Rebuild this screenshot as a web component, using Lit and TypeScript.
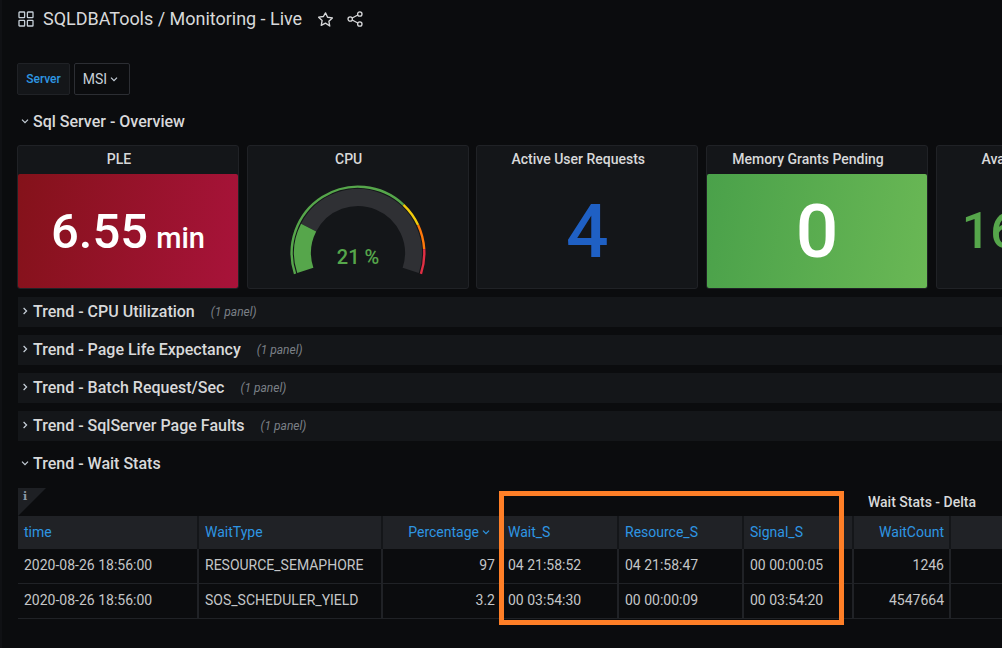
import { LitElement, html, css, svg } from "lit";
import { customElement } from "lit/decorators.js";

const CX = 358 - 248;
const CY = 254 - 175;
function pt(r: number, deg: number) {
  const a = (deg * Math.PI) / 180;
  return [CX - r * Math.cos(a), CY - r * Math.sin(a)];
}
// deg: 0 = left horizontal, growing clockwise over the top
function arc(r: number, from: number, to: number) {
  const [x1, y1] = pt(r, from);
  const [x2, y2] = pt(r, to);
  const large = to - from > 180 ? 1 : 0;
  return `M${x1.toFixed(2)} ${y1.toFixed(2)}A${r} ${r} 0 ${large} 1 ${x2.toFixed(2)} ${y2.toFixed(2)}`;
}
const START = -18.3;
const SWEEP = 216.6;
const at = (p: number) => START + (SWEEP * p) / 100;

const chevDown = html`<svg class="chev" viewBox="0 0 10 10"><path d="M2 3.6 5 6.6 8 3.6" fill="none" stroke="currentColor" stroke-width="1.2"/></svg>`;
const chevRight = html`<svg class="chev" viewBox="0 0 10 10"><path d="M3.6 2 6.6 5 3.6 8" fill="none" stroke="currentColor" stroke-width="1.2"/></svg>`;

@customElement("app-root")
export class AppRoot extends LitElement {
  static styles = css`
    :host {
      display: block;
      position: relative;
      width: 1002px;
      height: 648px;
      overflow: hidden;
      background: #0b0c0e;
      box-shadow: inset 2px 0 0 #101114;
      color: #d8d9da;
      font-family: Roboto, "Liberation Sans", sans-serif;
      font-size: 14px;
    }
    .page { padding-left: 18px; width: 1100px; box-sizing: border-box; }
    .header { height: 63px; display: flex; align-items: flex-start; color: #d8d9da; }
    .header-inner { height: 38px; display: flex; align-items: center; }
    .header .grid-ico { width: 16px; height: 16px; margin-right: 9px; color: #c7d0d9; }
    .title { font-size: 18px; letter-spacing: -0.02px; color: #d8d9da; white-space: nowrap; padding-bottom: 2px; }
    .star { width: 17px; height: 17px; margin-left: 15px; color: #d8d9da; }
    .share { width: 16px; height: 16px; margin-left: 13px; color: #d8d9da; }

    .vars { display: flex; height: 32px; margin-left: -1px; gap: 4px; }
    .var-label {
      width: 53px; box-sizing: border-box; display: flex; align-items: center; justify-content: center;
      background: #141619; border: 1px solid #202226; border-radius: 2px;
      color: #2e96e3; font-size: 12px; font-weight: 500;
    }
    .var-val {
      width: 56px; box-sizing: border-box; display: flex; align-items: center; justify-content: center;
      border: 1px solid #2c2e33; border-radius: 2px; color: #c7d0d9; font-size: 14px; padding-right: 2px;
    }
    .var-val .chev { width: 10px; height: 10px; margin-left: 2px; }

    .row-title {
      height: 30px; margin-top: 8px; display: flex; align-items: center;
      font-size: 16px; font-weight: 500; color: #d8d9da; white-space: nowrap;
      margin-left: 0; width: 984px; box-sizing: border-box;
    }
    .row-title.bg { background: #141619; }
    .rows .row-title { padding-bottom: 2px; }
    .row-title .chev { width: 10px; height: 10px; margin: 0 3px 0 2px; color: #c7d0d9; flex: none; }
    .row-title .count { font-size: 12px; font-weight: 400; font-style: italic; color: #7b8087; margin-left: 16px; margin-top: 2px; }
    .section { margin-top: 11px; }

    .panels { display: flex; gap: 7.67px; margin-top: 9px; margin-left: -1px; height: 144px; margin-bottom: 0; }
    .panel {
      width: 222px; height: 144px; box-sizing: border-box; flex: none;
      background: #141619; border: 1px solid #202226; border-radius: 3px;
      display: flex; flex-direction: column;
    }
    .ptitle { height: 28px; flex: none; display: flex; align-items: center; justify-content: center; font-size: 14px; font-weight: 500; color: #d8d9da; padding: 0 18px 2px 0; box-sizing: border-box; }
    .pbody { flex: 1; display: flex; align-items: center; justify-content: center; border-radius: 2px; }
    .red { background: linear-gradient(100deg, #84121a, #a8133a); }
    .green { background: linear-gradient(100deg, #4aa14a, #6ab855); }
    .big { font-weight: 500; color: #fff; line-height: 1; white-space: nowrap; }
    .ple { font-size: 49px; }
    .ple small { font-size: 29px; margin-left: 8px; }
    .four { font-size: 75px; color: #1f60c4; }
    .zero { font-size: 75px; }
    .avail { font-size: 50px; color: #56a64b; }
    .avail small { font-size: 26px; margin-left: 8px; }
    .gauge { width: 220px; height: 114px; display: block; }
    .gauge text { font-family: Roboto, sans-serif; font-size: 20px; font-weight: 500; fill: #56a64b; }

    .rows { margin-top: 8px; }
    .rows .row-title:first-child { margin-top: 0; }

    .tablewrap { position: relative; margin-top: 9px; width: 984px; }
    .corner {
      position: absolute; left: 0; top: 0; width: 0; height: 0;
      border-top: 28px solid #1e2024; border-right: 28px solid transparent;
    }
    .info { position: absolute; left: 5px; top: 3px; font-family: "DejaVu Serif", serif; font-size: 11px; font-weight: 700; color: #8e99a8; line-height: 1; }
    .ttitle { height: 28px; display: flex; align-items: center; justify-content: flex-end; padding-right: 26px; font-size: 14px; font-weight: 500; color: #d8d9da; }
    .tbl { display: grid; grid-template-columns: 181px 184px 119px 117px 125px 110px 97px 1fr; }
    .th, .td { box-sizing: border-box; display: flex; align-items: center; padding: 0 6px 2px 6px; white-space: nowrap; border-right: 2px solid #202226; }
    .th { height: 33px; background: #202226; color: #2e96e3; font-size: 14px; border-right-color: #141619; }
    .td { height: 35px; color: #c4c6c8; font-size: 14px; border-bottom: 1px solid #202226; }
    .r { justify-content: flex-end; padding-right: 5px; }
    .th .chev { width: 10px; height: 10px; margin-left: 2px; }
    .th.pct { padding-right: 9px; }
    .td.last, .th.last { border-right: none; }

    .highlight {
      position: absolute; left: 499px; top: 491px; width: 345px; height: 134px;
      box-sizing: border-box; border: 5px solid #ff7f27; pointer-events: none;
    }
  `;

  private gauge() {
    const bands = [
      { from: 0, to: 70, c: "#56a64b" },
      { from: 70, to: 80, c: "#f2cc0c" },
      { from: 80, to: 90, c: "#ff780a" },
      { from: 90, to: 100, c: "#e02f44" },
    ];
    return svg`
      <path d=${arc(55.5, at(21), at(100))} fill="none" stroke="#2f3034" stroke-width="17"/>
      <path d=${arc(55.5, at(0), at(21))} fill="none" stroke="#56a64b" stroke-width="17"/>
      ${bands.map((b) => svg`<path d=${arc(66.3, at(b.from), at(b.to))} fill="none" stroke=${b.c} stroke-width="2.4"/>`)}
      <text x=${CX} y=${CY + 11} text-anchor="middle">21 %</text>
    `;
  }

  private row(name: string) {
    return html`<div class="row-title bg">${chevRight}<span>${name}</span><span class="count">(1 panel)</span></div>`;
  }

  render() {
    const rows = [
      ["2020-08-26 18:56:00", "RESOURCE_SEMAPHORE", "97", "04 21:58:52", "04 21:58:47", "00 00:00:05", "1246"],
      ["2020-08-26 18:56:00", "SOS_SCHEDULER_YIELD", "3.2", "00 03:54:30", "00 00:00:09", "00 03:54:20", "4547664"],
    ];
    return html`
      <div class="page">
        <div class="header">
          <div class="header-inner">
            <svg class="grid-ico" viewBox="0 0 16 16" fill="none" stroke="currentColor" stroke-width="1.3">
              <rect x="1" y="1" width="5.6" height="5.6" rx=".6"/><rect x="9.4" y="1" width="5.6" height="5.6" rx=".6"/>
              <rect x="1" y="9.4" width="5.6" height="5.6" rx=".6"/><rect x="9.4" y="9.4" width="5.6" height="5.6" rx=".6"/>
            </svg>
            <span class="title">SQLDBATools / Monitoring - Live</span>
            <svg class="star" viewBox="0 0 24 24" fill="none" stroke="currentColor" stroke-width="1.9" stroke-linejoin="round">
              <path d="M12 2.6l2.95 6.2 6.75.95-4.9 4.75 1.2 6.75L12 17.1l-6 3.15 1.2-6.75-4.9-4.75 6.75-.95z"/>
            </svg>
            <svg class="share" viewBox="0 0 16 16" fill="none" stroke="currentColor" stroke-width="1.3">
              <circle cx="3.2" cy="8" r="2.2"/><circle cx="12.8" cy="3" r="2.2"/><circle cx="12.8" cy="13" r="2.2"/>
              <path d="M5.2 7 10.8 4M5.2 9l5.6 3"/>
            </svg>
          </div>
        </div>
        <div class="vars">
          <div class="var-label">Server</div>
          <div class="var-val">MSI ${chevDown}</div>
        </div>
        <div class="row-title section">${chevDown}<span>Sql Server - Overview</span></div>
        <div class="panels">
          <div class="panel">
            <div class="ptitle">PLE</div>
            <div class="pbody red"><span class="big ple">6.55<small>min</small></span></div>
          </div>
          <div class="panel">
            <div class="ptitle">CPU</div>
            <div class="pbody"><svg class="gauge" viewBox="0 0 220 114">${this.gauge()}</svg></div>
          </div>
          <div class="panel">
            <div class="ptitle">Active User Requests</div>
            <div class="pbody"><span class="big four">4</span></div>
          </div>
          <div class="panel">
            <div class="ptitle">Memory Grants Pending</div>
            <div class="pbody green"><span class="big zero">0</span></div>
          </div>
          <div class="panel">
            <div class="ptitle">Available Memory</div>
            <div class="pbody"><span class="big avail">16.38<small>GB</small></span></div>
          </div>
        </div>
        <div class="rows">
          ${this.row("Trend - CPU Utilization")}
          ${this.row("Trend - Page Life Expectancy")}
          ${this.row("Trend - Batch Request/Sec")}
          ${this.row("Trend - SqlServer Page Faults")}
          <div class="row-title">${chevDown}<span>Trend - Wait Stats</span></div>
        </div>
        <div class="tablewrap">
          <div class="corner"></div>
          <div class="info">i</div>
          <div class="ttitle">Wait Stats - Delta</div>
          <div class="tbl">
            <div class="th">time</div>
            <div class="th">WaitType</div>
            <div class="th r pct">Percentage ${chevDown}</div>
            <div class="th">Wait_S</div>
            <div class="th">Resource_S</div>
            <div class="th">Signal_S</div>
            <div class="th r">WaitCount</div>
            <div class="th last"></div>
            ${rows.map(
              (r) => html`
                <div class="td">${r[0]}</div>
                <div class="td">${r[1]}</div>
                <div class="td r">${r[2]}</div>
                <div class="td">${r[3]}</div>
                <div class="td">${r[4]}</div>
                <div class="td">${r[5]}</div>
                <div class="td r">${r[6]}</div>
                <div class="td last"></div>
              `
            )}
          </div>
        </div>
      </div>
      <div class="highlight"></div>
    `;
  }
}
